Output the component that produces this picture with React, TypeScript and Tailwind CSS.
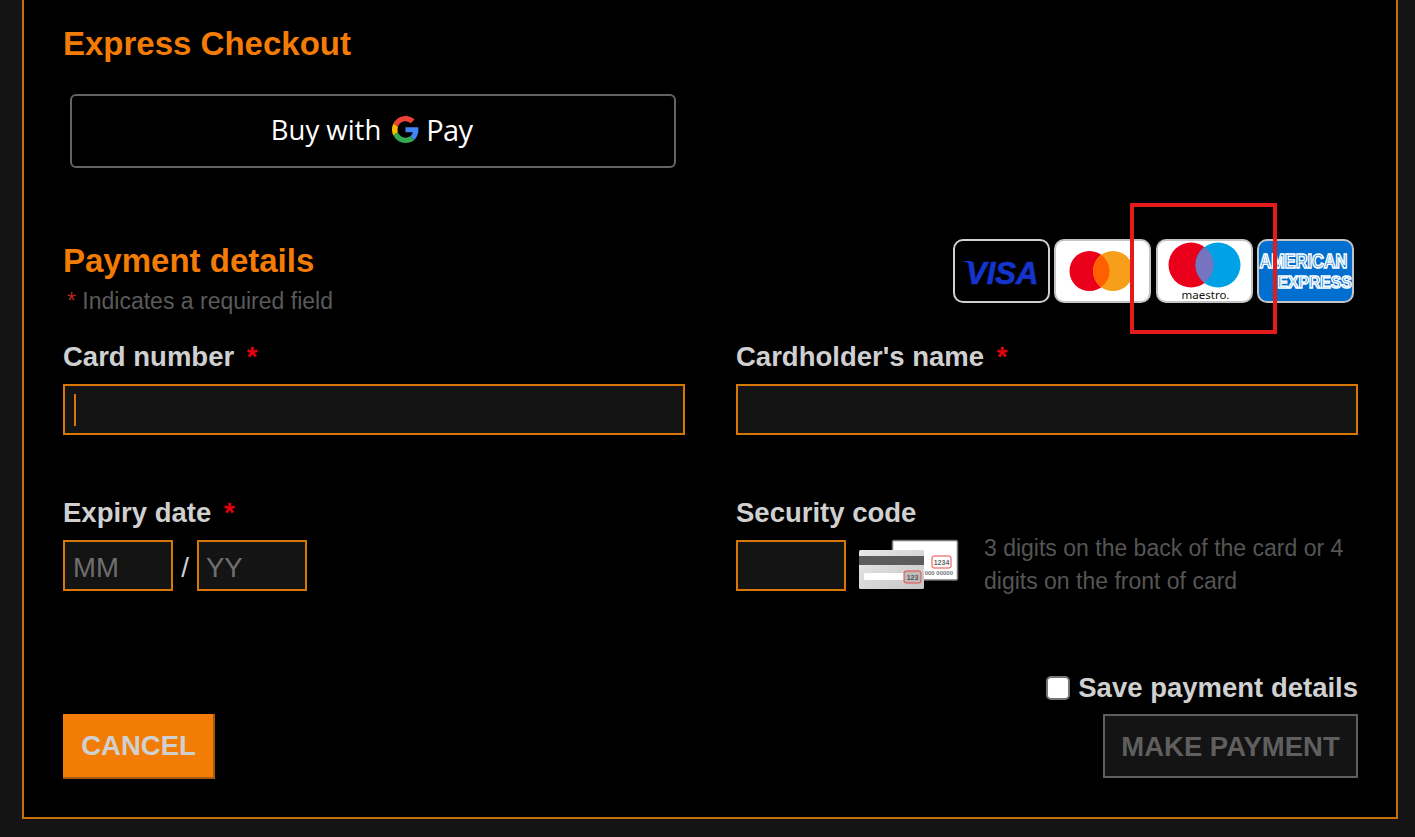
import React from 'react';

function GoogleG() {
  return (
    <svg width="27" height="27" viewBox="0 0 48 48" className="shrink-0">
      <path fill="#EA4335" d="M24 9.5c3.54 0 6.71 1.22 9.21 3.6l6.85-6.85C35.9 2.38 30.47 0 24 0 14.62 0 6.51 5.38 2.56 13.22l7.98 6.19C12.43 13.72 17.74 9.5 24 9.5z" />
      <path fill="#4285F4" d="M46.98 24.55c0-1.57-.15-3.09-.38-4.55H24v9.02h12.94c-.58 2.96-2.26 5.48-4.78 7.18l7.73 6c4.51-4.18 7.09-10.36 7.09-17.65z" />
      <path fill="#FBBC05" d="M10.53 28.59c-.48-1.45-.76-2.99-.76-4.59s.27-3.14.76-4.59l-7.98-6.19C.92 16.46 0 20.12 0 24c0 3.88.92 7.54 2.56 10.78l7.97-6.19z" />
      <path fill="#34A853" d="M24 48c6.48 0 11.93-2.13 15.89-5.81l-7.73-6c-2.15 1.45-4.92 2.3-8.16 2.3-6.26 0-11.57-4.22-13.47-9.91l-7.98 6.19C6.51 42.62 14.62 48 24 48z" />
    </svg>
  );
}

function VisaCard() {
  return (
    <div className="w-[97px] h-[64px] rounded-[10px] border-2 border-[#d0d0d0] bg-black flex items-center justify-center">
      <svg width="93" height="60" viewBox="0 0 93 60">
        <path d="M7 20 L16 20 L17 23 Z" fill="#1434cb" />
        <text x="11" y="43" fill="#1434cb" stroke="#1434cb" strokeWidth="0.700" fontSize="31" fontWeight="700" fontStyle="italic" fontFamily="'Liberation Sans', sans-serif">VISA</text>
      </svg>
    </div>
  );
}

function MastercardCard() {
  return (
    <div className="w-[97px] h-[64px] rounded-[10px] border-2 border-[#c4c4c4] bg-white flex items-center justify-center">
      <svg width="93" height="60" viewBox="0 0 93 60">
        <circle cx="33.500" cy="30" r="20" fill="#eb001b" />
        <circle cx="57" cy="30" r="20" fill="#f79e1b" />
        <path d="M45.250 13.800 A20 20 0 0 1 45.250 46.200 A20 20 0 0 1 45.250 13.800 Z" fill="#ff5f00" />
      </svg>
    </div>
  );
}

function MaestroCard() {
  return (
    <div className="w-[97px] h-[64px] rounded-[10px] border-2 border-[#c4c4c4] bg-white flex items-center justify-center">
      <svg width="93" height="60" viewBox="0 0 93 60">
        <circle cx="33" cy="24" r="22.500" fill="#eb001b" />
        <circle cx="60" cy="24" r="22.500" fill="#00a2e5" />
        <path d="M46.500 6 A22.500 22.500 0 0 1 46.500 42 A22.500 22.500 0 0 1 46.500 6 Z" fill="#7673c0" />
        <text x="47.500" y="57.500" textAnchor="middle" fill="#111" fontSize="11.500" fontFamily="'Noto Sans', sans-serif">maestro.</text>
      </svg>
    </div>
  );
}

function AmexCard() {
  return (
    <div className="w-[97px] h-[64px] rounded-[10px] border-2 border-[#c4c4c4] bg-[#016fd0] flex items-center justify-center">
      <svg width="93" height="60" viewBox="0 0 93 60">
        <g fill="#016fd0" stroke="#fff" strokeWidth="1.400" fontWeight="700" fontFamily="'Liberation Sans', sans-serif">
          <text transform="translate(0.500 27) scale(1 1.2)" fontSize="16.300">AMERICAN</text>
          <text transform="translate(18.500 47) scale(1 1.07)" fontSize="15.700">EXPRESS</text>
        </g>
      </svg>
    </div>
  );
}

function SecurityCodeImage() {
  return (
    <svg width="100" height="54" viewBox="0 0 100 54" className="shrink-0">
      <defs>
        <linearGradient id="cardBack" x1="0" y1="0" x2="1" y2="1">
          <stop offset="0" stopColor="#e8e8e8" />
          <stop offset="1" stopColor="#c6c6c6" />
        </linearGradient>
      </defs>
      <rect x="33.500" y="2.500" width="65" height="39.500" rx="1.500" fill="#fff" stroke="#777" strokeWidth="1.500" />
      <rect x="73" y="18" width="19" height="12" rx="2" fill="#fff" stroke="#ef4444" strokeWidth="1" />
      <text x="82.500" y="27" textAnchor="middle" fontSize="7" fontWeight="700" fill="#666" fontFamily="'Liberation Sans', sans-serif">1234</text>
      <text x="94" y="37" textAnchor="end" fontSize="6" fontWeight="700" fill="#777" fontFamily="'Liberation Sans', sans-serif">000 00000</text>
      <rect x="0" y="12" width="65" height="39" rx="1.500" fill="url(#cardBack)" />
      <rect x="0" y="18" width="65" height="9" fill="#5c5c5c" />
      <rect x="5" y="35" width="42" height="7" rx="1" fill="#fff" />
      <rect x="45" y="33" width="17" height="12" rx="2" fill="#bdbdbd" stroke="#ef4444" strokeWidth="1" />
      <text x="53.500" y="41.500" textAnchor="middle" fontSize="7" fontWeight="700" fill="#555" fontFamily="'Liberation Sans', sans-serif">123</text>
    </svg>
  );
}

export default function App() {
  return (
    <div className="relative h-[837px] overflow-hidden bg-[#141414] font-['Liberation_Sans',Arial,sans-serif]">
      <div className="ml-[22px] mr-[17px] h-[819px] border-x-2 border-b-2 border-[#c96f0a] bg-black pl-[39px] pr-[38px] pt-[24px]">
        <h2 className="text-[33px] leading-[40px] font-bold text-[#f27c05]">Express Checkout</h2>

        <button className="mt-[30px] ml-[7px] flex h-[74px] w-[606px] items-center justify-center rounded-[6px] border-2 border-[#636363] bg-black pb-[3px] pr-[3px] text-white">
          <span className="mr-[11px] font-['Open_Sans',sans-serif] text-[27.500px] leading-none">Buy with</span>
          <GoogleG />
          <span className="ml-[7px] font-['Open_Sans',sans-serif] text-[29px] font-normal leading-none tracking-tight">Pay</span>
        </button>

        <div className="mt-[71px] flex justify-between pr-[4px]">
          <div>
            <h2 className="mt-[2px] text-[33px] leading-[40px] font-bold text-[#f27c05]">Payment details</h2>
            <p className="ml-[4px] mt-[5px] text-[23px] leading-[30px] text-[#5a5a5a]">
              <span className="text-[#b3261e]">*</span> Indicates a required field
            </p>
          </div>
          <div className="flex gap-[4.330px]">
            <VisaCard />
            <MastercardCard />
            <MaestroCard />
            <AmexCard />
          </div>
        </div>

        <div className="mt-[24px] grid grid-cols-2 gap-x-[51px]">
          <div>
            <label className="block text-[27.500px] leading-[34px] font-bold text-[#d0d0d0]">
              Card number <span className="ml-[5px] text-[#e3000f]">*</span>
            </label>
            <div className="relative mt-[10px] h-[51px] border-2 border-[#d97706] bg-[#141414]">
              <span className="absolute left-[9px] top-[8px] h-[32px] w-[2px] bg-[#d97706]" />
            </div>
          </div>
          <div>
            <label className="block text-[27.500px] leading-[34px] font-bold text-[#d0d0d0]">
              Cardholder's name <span className="ml-[5px] text-[#e3000f]">*</span>
            </label>
            <div className="mt-[10px] h-[51px] border-2 border-[#d97706] bg-[#141414]" />
          </div>

          <div className="mt-[61px]">
            <label className="block text-[27.500px] leading-[34px] font-bold text-[#d0d0d0]">
              Expiry date <span className="ml-[5px] text-[#e3000f]">*</span>
            </label>
            <div className="mt-[10px] flex items-center">
              <div className="flex h-[51px] w-[110px] items-center border-2 border-[#d97706] bg-[#141414] pl-[8px] pt-[4px] text-[27.500px] text-[#6f6f6f]">MM</div>
              <span className="w-[24px] pt-[4px] text-center text-[27.500px] text-[#d0d0d0]">/</span>
              <div className="flex h-[51px] w-[110px] items-center border-2 border-[#d97706] bg-[#141414] pl-[7px] pt-[4px] text-[27.500px] text-[#6f6f6f]">YY</div>
            </div>
          </div>
          <div className="mt-[61px]">
            <label className="block text-[27.500px] leading-[34px] font-bold text-[#d0d0d0]">Security code</label>
            <div className="mt-[10px] flex items-start">
              <div className="h-[51px] w-[110px] shrink-0 border-2 border-[#d97706] bg-[#141414]" />
              <div className="ml-[13px] -mt-[2px]">
                <SecurityCodeImage />
              </div>
              <p className="ml-[25px] -mt-[8px] w-[375px] text-[23px] leading-[33px] text-[#555]">
                3 digits on the back of the card or 4 digits on the front of card
              </p>
            </div>
          </div>
        </div>

        <div className="mt-[73px] flex flex-col items-end">
          <label className="flex items-center text-[27.500px] leading-[34px] font-bold text-[#d0d0d0]">
            <span className="mr-[8px] block h-[24px] w-[24px] rounded-[5px] border-2 border-[#767676] bg-white" />
            Save payment details
          </label>
        </div>

        <div className="mt-[9px] flex items-start justify-between">
          <button className="h-[65px] w-[152px] border-b-2 border-r-2 border-[#a8590a] bg-[#f27c05] pl-[1px] pt-[1px] text-[27.500px] font-bold text-[#d0d0d0]">CANCEL</button>
          <button className="h-[64px] w-[255px] border-2 border-[#5f5f5f] bg-[#141414] pt-[1px] text-[27.500px] font-bold text-[#5f5f5f]">MAKE PAYMENT</button>
        </div>
      </div>

      {/* red highlight around the maestro logo */}
      <div className="absolute left-[1130px] top-[203px] h-[131px] w-[147px] border-[4px] border-[#e31b1b]" />
    </div>
  );
}
